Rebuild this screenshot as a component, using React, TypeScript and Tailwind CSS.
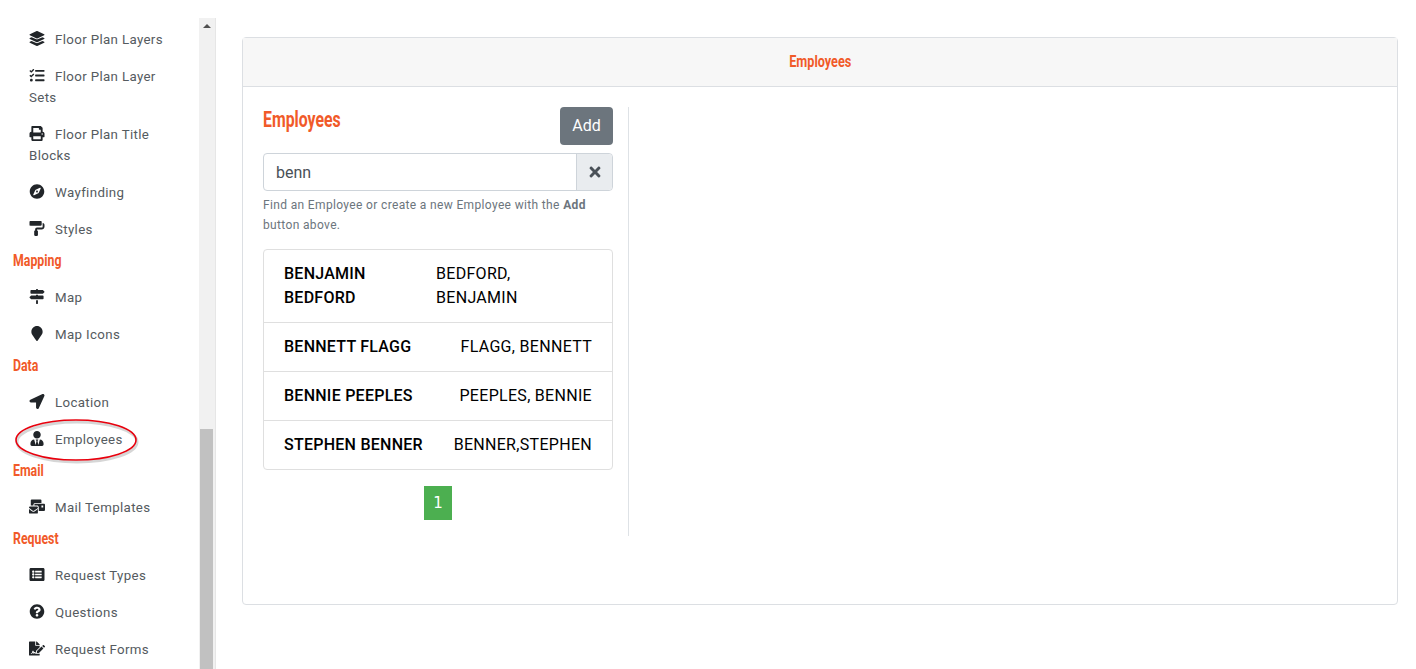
import React from "react";
import {
  FaLayerGroup, FaTasks, FaPrint, FaCompass, FaPaintRoller, FaMapSigns, FaMapMarker,
  FaLocationArrow, FaUserTie, FaMailBulk, FaListAlt, FaQuestionCircle, FaFileSignature, FaTimes,
} from "react-icons/fa";

const Item = ({ icon: Icon, children }: { icon: any; children: React.ReactNode }) => (
  <div className="mb-4 text-[13.3px] leading-[21px] tracking-[0.35px] text-[#555b60]">
    <Icon className="mr-[10px] inline-block h-[15px] w-[16px] align-[-2px] text-[#212529]" />
    {children}
  </div>
);

const Head = ({ children }: { children: React.ReactNode }) => (
  <div className="-mt-[6px] mb-4 origin-left scale-x-[0.77] text-[16px] leading-[21px] font-bold text-[#f15a29]">
    {children}
  </div>
);

const rows = [
  ["BENJAMIN BEDFORD", "BEDFORD, BENJAMIN"],
  ["BENNETT FLAGG", "FLAGG, BENNETT"],
  ["BENNIE PEEPLES", "PEEPLES, BENNIE"],
  ["STEPHEN BENNER", "BENNER,STEPHEN"],
];

export default function App() {
  return (
    <div className="relative flex h-[669px] overflow-hidden bg-white font-['Roboto',sans-serif]">
      <aside className="h-full w-[199px] shrink-0 overflow-hidden pt-[29px] pl-[13px]">
        <div className="pr-6 pl-4">
          <Item icon={FaLayerGroup}>Floor Plan Layers</Item>
          <Item icon={FaTasks}>Floor Plan Layer Sets</Item>
          <Item icon={FaPrint}>Floor Plan Title Blocks</Item>
          <Item icon={FaCompass}>Wayfinding</Item>
          <Item icon={FaPaintRoller}>Styles</Item>
        </div>
        <Head>Mapping</Head>
        <div className="pr-6 pl-4">
          <Item icon={FaMapSigns}>Map</Item>
          <Item icon={FaMapMarker}>Map Icons</Item>
        </div>
        <Head>Data</Head>
        <div className="pr-6 pl-4">
          <Item icon={FaLocationArrow}>Location</Item>
          <Item icon={FaUserTie}>Employees</Item>
        </div>
        <Head>Email</Head>
        <div className="pr-6 pl-4">
          <Item icon={FaMailBulk}>Mail Templates</Item>
        </div>
        <Head>Request</Head>
        <div className="pr-6 pl-4">
          <Item icon={FaListAlt}>Request Types</Item>
          <Item icon={FaQuestionCircle}>Questions</Item>
          <div className="-mb-4">
            <Item icon={FaFileSignature}>Request Forms</Item>
          </div>
        </div>
      </aside>

      <div className="mt-[18px] flex w-[17px] shrink-0 flex-col items-center border-r border-[#e6e6e6] bg-[#f1f1f1]">
        <div className="mt-[6px] h-0 w-0 border-x-[4px] border-b-[4px] border-x-transparent border-b-[#505050]" />
        <div className="mt-[401px] h-[240px] w-[13px] -translate-x-[1px] bg-[#c1c1c1]" />
      </div>

      <main className="min-w-0 flex-1 pt-[37px] pr-[18px] pl-[26px]">
        <div className="h-[568px] rounded border border-[#dcdfe3]">
          <div className="flex h-[49px] items-center justify-center border-b border-[#dcdfe3] bg-[#f7f7f7]">
            <span className="scale-x-[0.79] text-[16px] font-bold text-[#f15a29]">Employees</span>
          </div>
          <div className="pt-5 pl-5">
            <div className="h-[429px] w-[366px] border-r border-[#dee2e6] pr-[15px]">
              <div className="flex items-start justify-between">
                <div className="mt-[1px] origin-left scale-x-[0.72] text-[22px] leading-[24px] font-bold text-[#f15a29]">Employees</div>
                <button className="h-[38px] w-[53px] rounded bg-[#6c757d] text-[16px] text-white">Add</button>
              </div>
              <div className="mt-2 flex h-[38px] rounded border border-[#ced4da] text-[#495057]">
                <div className="flex flex-1 items-center pt-[2px] pl-3 text-[16px]">benn</div>
                <div className="flex w-[36px] items-center justify-center rounded-r border-l border-[#ced4da] bg-[#e9ecef]">
                  <FaTimes className="h-[16px] w-[14px] text-[#495057]" />
                </div>
              </div>
              <p className="mt-[4px] text-[12px] leading-[20px] tracking-[0.35px] text-[#6c757d]">
                Find an Employee or create a new Employee with the <b className="font-bold">Add</b> button above.
              </p>
              <div className="mt-[14px] rounded border border-[#dfdfdf] text-[16px] leading-[24px] text-black">
                {rows.map(([a, b], i) => (
                  <div key={a} className={`flex items-center justify-between gap-[12px] px-5 py-3 ${i ? "border-t border-[#dfdfdf]" : ""}`}>
                    <span className="font-medium tracking-[0.25px]">{a}</span>
                    <span className={i ? "tracking-[0.3px]" : "w-[156px] shrink-0 tracking-[0.3px]"}>{b}</span>
                  </div>
                ))}
              </div>
              <div className="mt-4 flex justify-center">
                <span className="flex h-[34px] w-[28px] items-center justify-center bg-[#4caf50] font-['DejaVu_Sans',sans-serif] text-[15px] text-white">1</span>
              </div>
            </div>
          </div>
        </div>
      </main>

      <svg className="pointer-events-none absolute top-[416px] left-[12px]" width="130" height="50" viewBox="0 0 130 50" fill="none">
        <ellipse cx="65" cy="26" rx="60" ry="20" fill="none" stroke="#000" strokeOpacity="0.16" strokeWidth="3" />
        <ellipse cx="64" cy="24" rx="60" ry="20" stroke="#e8000d" strokeWidth="1.6" />
      </svg>
    </div>
  );
}
